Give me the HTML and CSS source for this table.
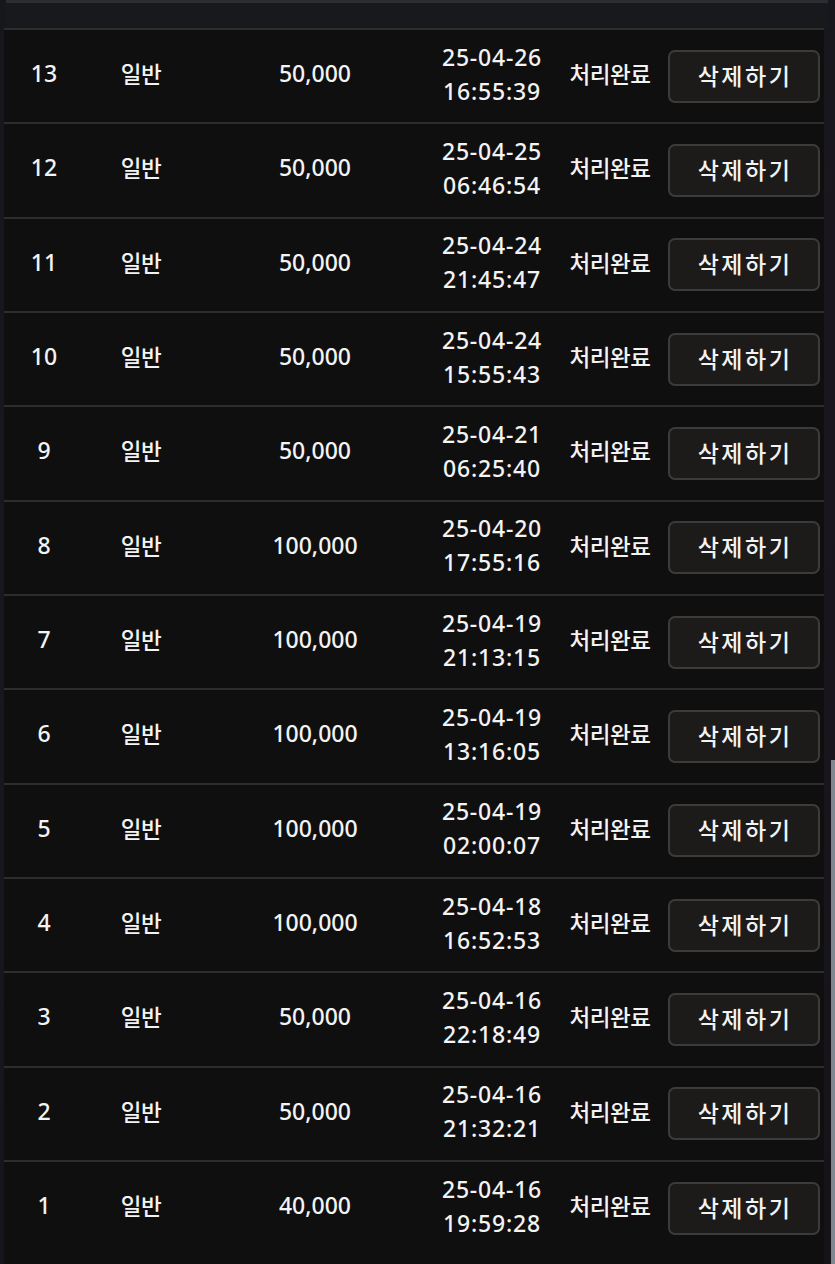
FILE: index.html
```html
<!DOCTYPE html>
<html lang="ko">
<head>
<meta charset="utf-8">
<link rel="stylesheet" href="styles.css">
</head>
<body>
<div class="page">
  <div class="topbar"></div>
  <div class="table">
    <div class="row"><span class="c no">13</span><span class="c kind">일반</span><span class="c amt">50,000</span><span class="c date">25-04-26<br>16:55:39</span><span class="c st">처리완료</span><span class="c act"><button class="btn">삭제하기</button></span></div>
    <div class="row"><span class="c no">12</span><span class="c kind">일반</span><span class="c amt">50,000</span><span class="c date">25-04-25<br>06:46:54</span><span class="c st">처리완료</span><span class="c act"><button class="btn">삭제하기</button></span></div>
    <div class="row"><span class="c no">11</span><span class="c kind">일반</span><span class="c amt">50,000</span><span class="c date">25-04-24<br>21:45:47</span><span class="c st">처리완료</span><span class="c act"><button class="btn">삭제하기</button></span></div>
    <div class="row"><span class="c no">10</span><span class="c kind">일반</span><span class="c amt">50,000</span><span class="c date">25-04-24<br>15:55:43</span><span class="c st">처리완료</span><span class="c act"><button class="btn">삭제하기</button></span></div>
    <div class="row"><span class="c no">9</span><span class="c kind">일반</span><span class="c amt">50,000</span><span class="c date">25-04-21<br>06:25:40</span><span class="c st">처리완료</span><span class="c act"><button class="btn">삭제하기</button></span></div>
    <div class="row"><span class="c no">8</span><span class="c kind">일반</span><span class="c amt">100,000</span><span class="c date">25-04-20<br>17:55:16</span><span class="c st">처리완료</span><span class="c act"><button class="btn">삭제하기</button></span></div>
    <div class="row"><span class="c no">7</span><span class="c kind">일반</span><span class="c amt">100,000</span><span class="c date">25-04-19<br>21:13:15</span><span class="c st">처리완료</span><span class="c act"><button class="btn">삭제하기</button></span></div>
    <div class="row"><span class="c no">6</span><span class="c kind">일반</span><span class="c amt">100,000</span><span class="c date">25-04-19<br>13:16:05</span><span class="c st">처리완료</span><span class="c act"><button class="btn">삭제하기</button></span></div>
    <div class="row"><span class="c no">5</span><span class="c kind">일반</span><span class="c amt">100,000</span><span class="c date">25-04-19<br>02:00:07</span><span class="c st">처리완료</span><span class="c act"><button class="btn">삭제하기</button></span></div>
    <div class="row"><span class="c no">4</span><span class="c kind">일반</span><span class="c amt">100,000</span><span class="c date">25-04-18<br>16:52:53</span><span class="c st">처리완료</span><span class="c act"><button class="btn">삭제하기</button></span></div>
    <div class="row"><span class="c no">3</span><span class="c kind">일반</span><span class="c amt">50,000</span><span class="c date">25-04-16<br>22:18:49</span><span class="c st">처리완료</span><span class="c act"><button class="btn">삭제하기</button></span></div>
    <div class="row"><span class="c no">2</span><span class="c kind">일반</span><span class="c amt">50,000</span><span class="c date">25-04-16<br>21:32:21</span><span class="c st">처리완료</span><span class="c act"><button class="btn">삭제하기</button></span></div>
    <div class="row"><span class="c no">1</span><span class="c kind">일반</span><span class="c amt">40,000</span><span class="c date">25-04-16<br>19:59:28</span><span class="c st">처리완료</span><span class="c act"><button class="btn">삭제하기</button></span></div>
  </div>
  <div class="scrollbar"></div>
</div>
</body>
</html>
```
FILE: styles.css
```css
* { box-sizing: border-box; }
html, body { margin: 0; padding: 0; }
body {
  width: 835px;
  height: 1264px;
  overflow: hidden;
  background: linear-gradient(160deg, #17171b 0%, #1a1620 45%, #151318 100%);
  font-family: "Noto Sans", "Noto Sans CJK KR", sans-serif;
  color: #f3f3f3;
}
.page {
  position: relative;
  height: 1264px;
}
.topbar {
  height: 28px;
  margin: 0 7px 0 6px;
  background: #18191c;
  border-top: 3px solid #2b2d30;
}
.table {
  margin-left: 4px;
  width: 820px;
  min-height: 1236px;
  background: #0f0f10;
}
.row {
  height: 94.33px;
  display: grid;
  grid-template-columns: 80px 114px 234px 120px 116px 152px;
  align-items: center;
  border-top: 2px solid #2d2d2f;
  padding: 0 4px 6px 0;
}
.c {
  text-align: center;
  font-size: 23px;
  line-height: 34px;
  font-weight: 500;
}
.no, .amt, .date { font-family: "Noto Sans", sans-serif; }
.kind, .st {
  font-family: "Noto Sans CJK KR", sans-serif;
  font-size: 22.5px;
  letter-spacing: -0.4px;
  font-weight: 500;
}
.date { letter-spacing: 0.8px; padding-top: 1px; }
.act { display: flex; }
.btn {
  width: 152px;
  height: 53px;
  margin-top: 6px;
  background: #1d1b1a;
  border: 2px solid #3d3b39;
  border-radius: 7px;
  color: #f3f3f3;
  font-family: "Noto Sans CJK KR", sans-serif;
  font-size: 23px;
  font-weight: 500;
  letter-spacing: 2.5px;
  padding: 0 0 3px 2px;
}
.scrollbar {
  position: absolute;
  right: 0;
  top: 760px;
  width: 4px;
  height: 504px;
  background: #7f8891;
}
```
